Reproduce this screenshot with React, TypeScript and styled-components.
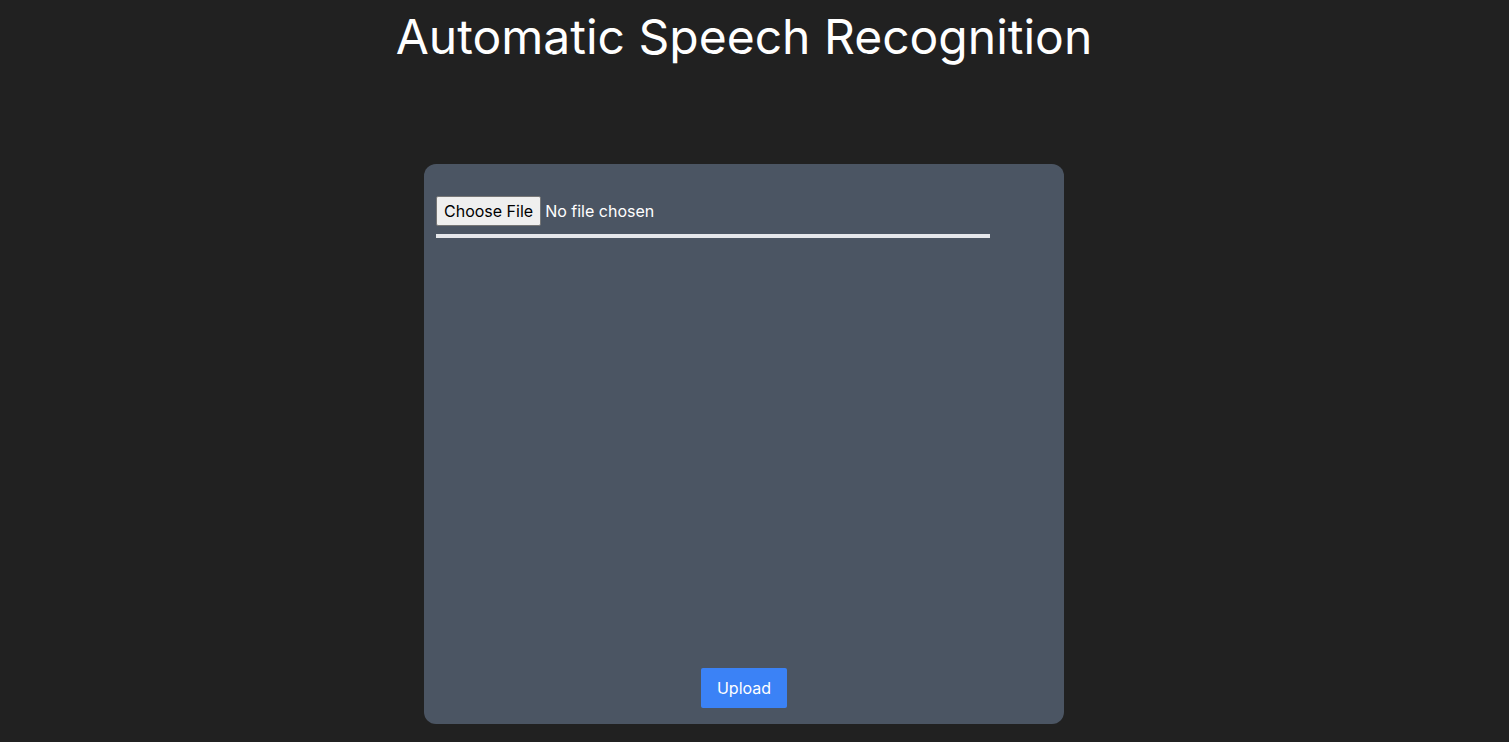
import React from 'react';
import styled, { createGlobalStyle } from 'styled-components';

const GlobalStyle = createGlobalStyle`
  html, body {
    margin: 0;
    padding: 0;
    background-color: #212121;
    color: #ffffff;
    font-family: Inter, "Noto Sans", sans-serif;
  }

  * {
    box-sizing: border-box;
  }
`;

const Page = styled.main`
  min-height: 100vh;
  display: flex;
  flex-direction: column;
  align-items: center;
  padding: 8px 21px 0 0;
`;

const Title = styled.h1`
  margin: 0;
  font-size: 48px;
  font-weight: 400;
  line-height: 1.21;
  letter-spacing: 0;
`;

const Card = styled.section`
  margin-top: 98px;
  width: 640px;
  height: 560px;
  background-color: #4b5563;
  border-radius: 12px;
  padding: 32px 12px 16px;
  display: flex;
  flex-direction: column;
`;

const FileInput = styled.input`
  font: inherit;
  font-size: 16px;
  color: #ffffff;
  height: 30px;

  &::file-selector-button {
    font: inherit;
    height: 30px;
    padding: 0 7px;
    margin-right: 4px;
    background-color: #efefef;
    color: #000000;
    border: 1px solid #767676;
    border-radius: 2px;
  }
`;

const Bar = styled.div`
  margin-top: 8px;
  width: 554px;
  height: 4px;
  background-color: #e5e7eb;
`;

const UploadButton = styled.button`
  margin-top: auto;
  align-self: center;
  height: 40px;
  padding: 0 16px;
  border: none;
  border-radius: 2px;
  background-color: #3b82f6;
  color: #ffffff;
  font: inherit;
  font-size: 16px;
  cursor: pointer;
`;

const App: React.FC = () => {
  return (
    <>
      <GlobalStyle />
      <Page>
        <Title>Automatic Speech Recognition</Title>
        <Card>
          <FileInput type="file" accept="audio/*" />
          <Bar />
          <UploadButton type="button">Upload</UploadButton>
        </Card>
      </Page>
    </>
  );
};

export default App;
